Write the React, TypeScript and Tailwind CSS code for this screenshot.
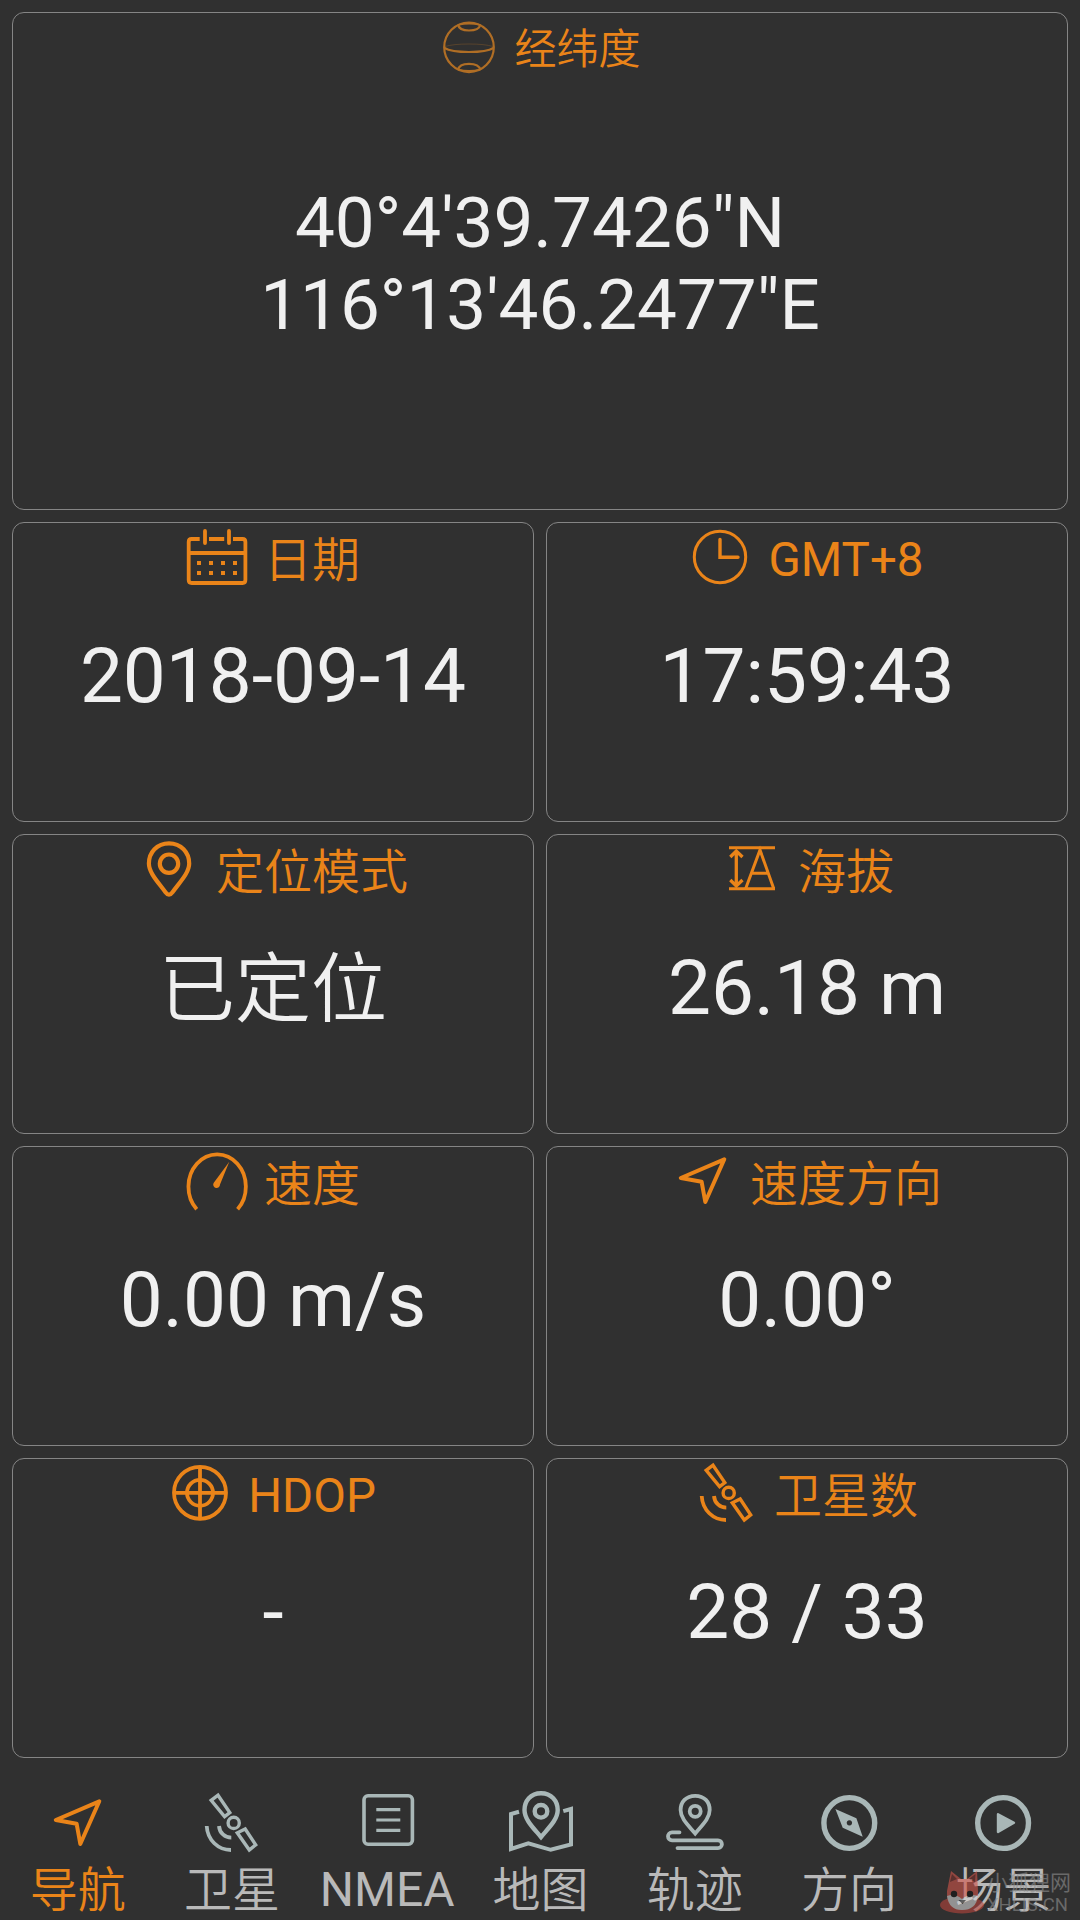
import type { ReactNode } from "react";

function Icon({ children, className = "" }: { children: ReactNode; className?: string }) {
  return (
    <svg
      viewBox="0 0 60 60"
      className={`size-[60px] shrink-0 overflow-visible ${className}`}
      fill="none"
      stroke="currentColor"
      strokeWidth={3.8}
    >
      {children}
    </svg>
  );
}

const GlobeIcon = () => (
  <Icon className="text-[#b06e25]">
    <g strokeWidth={2.2}>
      <circle cx="30" cy="30.3" r="24.8" />
      <path d="M19 7.500 Q20 13.5 30 13.5 Q40 13.5 41.500 7.500" />
      <path d="M19 53 Q20 46.8 30 46.8 Q40 46.8 41.500 53" />
      <path d="M5.5 31 Q12 35 30 35 Q48 35 54.5 31" />
      <path d="M6 29.5 Q14 27 30 27 Q46 27 54 29.5" strokeWidth={1} opacity={0.3} />
      <path d="M19 8 Q30 5 41.500 8 M19 52.5 Q30 55.500 41.500 52.5" strokeWidth={1.8} />
    </g>
  </Icon>
);

const CalendarIcon = () => (
  <Icon>
    <path d="M13.7 12 H5.5 Q2.7 12 2.7 15 V53 Q2.7 56 5.7 56 H56.5 Q59.4 56 59.4 53 V15 Q59.4 12 56.5 12 H47 M23 12 H38.2 M2.7 26 H59.4" />
    <path d="M19 4 V16 M43 4 V16" strokeLinecap="round" />
    <path d="M11 36 h4 M23 36 h4 M35 36 h4 M47 36 h4 M11 46 h4 M23 46 h4 M35 46 h4 M47 46 h4" strokeWidth={4} />
  </Icon>
);

const ClockIcon = () => (
  <Icon>
    <circle cx="30" cy="30" r="25.7" strokeWidth={3} />
    <path d="M30 12.5 V30.3 H48" strokeWidth={3.4} strokeLinecap="round" />
  </Icon>
);

const PinIcon = () => (
  <Icon>
    <path
      d="M31 4.3 C19 4.3 10.9 13.3 10.9 24.5 C10.9 34 20.5 43.5 27.5 53.2 Q31 58 34.5 53.2 C41.5 43.5 51.2 34 51.2 24.5 C51.2 13.3 43 4.3 31 4.3Z"
      strokeWidth={4.2}
    />
    <circle cx="31" cy="24.7" r="9.2" strokeWidth={4.2} />
  </Icon>
);

const AltitudeIcon = () => (
  <Icon>
    <g strokeWidth={3}>
      <path d="M9 8.7 H55 M9 49.8 H55" />
      <path d="M16.3 12 V47 M10.3 18 L16.3 12 L22.5 18 M10.3 41 L16.3 47 L22.5 41" strokeWidth={3.3} />
      <path d="M25.7 49.5 L40 11 L53.7 49.5 M30.5 34.3 H48.5" />
    </g>
  </Icon>
);

const SpeedIcon = () => (
  <Icon>
    <path d="M10.7 58.3 A28.7 32.3 0 1 1 51.6 58.3" />
    <path d="M43.3 10.7 L34 33.5 A3.4 3.4 0 1 1 27.6 32 Z" fill="currentColor" stroke="none" />
  </Icon>
);

const ArrowIcon = () => (
  <Icon>
    <path d="M52.3 8.3 L8.8 27 L29.6 30.7 L33.3 51 Z" strokeLinejoin="round" strokeWidth={4} />
  </Icon>
);

const TargetIcon = () => (
  <Icon>
    <circle cx="30" cy="29.8" r="26" />
    <circle cx="30" cy="29.8" r="13" />
    <path d="M30 3 V57 M3 29.8 H57" />
  </Icon>
);

const SatelliteIcon = () => (
  <Icon>
    <g strokeWidth={3.4}>
      <path d="M17 2.2 L28.8 19.6 L23.6 23.6 L10.2 7.3 Z" />
      <path d="M44.2 36 L54.7 51.8 L48.3 57 L36.3 39.8 Z" />
      <circle cx="32.7" cy="29.9" r="5.6" />
      <path d="M18 33 C18.5 40 24 44.7 30.3 44.7 M5.7 33 C6.5 47 17 57 30 57" strokeWidth={3.8} />
    </g>
  </Icon>
);

const ListIcon = () => (
  <Icon>
    <rect x="8" y="2.8" width="48.4" height="48.4" rx="4" strokeWidth={3.6} />
    <path d="M20.3 16.7 H44.3 M20.3 27 H44.3 M20.3 37.3 H44.3" strokeWidth={3.2} />
  </Icon>
);

const MapIcon = () => (
  <Icon>
    <g strokeWidth={4.4}>
      <path d="M9 18.8 L1 21 V56 L18.3 50.3 L40.7 56.8 L61 51.5 V16 L53.3 18.2" strokeWidth={4} />
      <path d="M31 0.2 C20.5 0.2 14.5 8 14.5 17 C14.5 26.5 23 34.5 31 44 C39 34.5 47.7 26.5 47.7 17 C47.7 8 41.5 0.2 31 0.2Z" />
      <circle cx="31" cy="18.3" r="6.3" />
    </g>
  </Icon>
);

const TrackIcon = () => (
  <Icon>
    <path d="M31.2 2.8 C22 2.8 16.6 9 16.6 17 C16.6 25.5 24 32 31.2 40.5 C38.4 32 45.7 25.5 45.7 17 C45.7 9 40.5 2.8 31.2 2.8Z" />
    <circle cx="31.2" cy="18.3" r="5.5" />
    <path
      d="M15.5 39.3 H8 A4 4 0 0 0 8 47.3 H54 A3.9 3.9 0 0 1 54 55.1 H13.5"
      strokeLinecap="round"
    />
  </Icon>
);

const CompassIcon = () => (
  <Icon>
    <circle cx="30.3" cy="30" r="25.4" strokeWidth={5.4} />
    <path
      d="M16.4 16 L37.4 25.3 L43.7 43.7 L23.7 34.7 Z M30.4 27.2 a2.7 2.7 0 1 0 0.01 0 Z"
      fill="currentColor"
      fillRule="evenodd"
      stroke="none"
    />
  </Icon>
);

const PlayIcon = () => (
  <Icon>
    <circle cx="30.1" cy="30" r="25.4" strokeWidth={5.4} />
    <path d="M25 21.3 L41 29.8 L25 39 Z" fill="currentColor" strokeWidth={2.4} strokeLinejoin="round" />
  </Icon>
);

type CardData = { label: string; value: string; icon: ReactNode };

const cards: CardData[] = [
  { label: "日期", value: "2018-09-14", icon: <CalendarIcon /> },
  { label: "GMT+8", value: "17:59:43", icon: <ClockIcon /> },
  { label: "定位模式", value: "已定位", icon: <PinIcon /> },
  { label: "海拔", value: "26.18 m", icon: <AltitudeIcon /> },
  { label: "速度", value: "0.00 m/s", icon: <SpeedIcon /> },
  { label: "速度方向", value: "0.00°", icon: <ArrowIcon /> },
  { label: "HDOP", value: "-", icon: <TargetIcon /> },
  { label: "卫星数", value: "28 / 33", icon: <SatelliteIcon /> },
];

const tabs: { label: string; icon: ReactNode }[] = [
  { label: "导航", icon: <ArrowIcon /> },
  { label: "卫星", icon: <SatelliteIcon /> },
  { label: "NMEA", icon: <ListIcon /> },
  { label: "地图", icon: <MapIcon /> },
  { label: "轨迹", icon: <TrackIcon /> },
  { label: "方向", icon: <CompassIcon /> },
  { label: "场景", icon: <PlayIcon /> },
];

const isHan = (text: string) => /[\u4e00-\u9fff]/.test(text);

function InfoCard({ label, value, icon }: CardData) {
  return (
    <section className="h-[300px] rounded-[12px] border border-[#858585] pt-1">
      <h2 className="flex h-[60px] items-center justify-center gap-[18px] text-[#ea8419]">
        {icon}
        <span
          className={
            isHan(label)
              ? "pt-[7px] text-[48px] leading-[60px] font-[350] whitespace-nowrap"
              : "pt-[5px] text-[47.5px] leading-[60px] whitespace-nowrap"
          }
        >
          {label}
        </span>
      </h2>
      <p
        className={
          isHan(value)
            ? "mt-[43px] text-center text-[76px] leading-[96px] font-[350] whitespace-nowrap text-[#f0f0f0]"
            : "mt-[41px] text-center text-[76.5px] leading-[96px] whitespace-nowrap text-[#f0f0f0]"
        }
      >
        {value}
      </p>
    </section>
  );
}

function Watermark() {
  return (
    <div className="absolute right-[9px] bottom-[5px] flex items-end gap-0.5 opacity-60">
      <svg viewBox="0 0 46 46" className="h-[46px] w-[46px]">
        <ellipse cx="23" cy="36" rx="22" ry="8.5" fill="#b8453c" />
        <path d="M8 22 L12 2 L22 10 H28 L38 2 L39 22 Q40 41 23 41 Q7 41 8 22Z" fill="#d2554a" />
        <path d="M11 13 L13 5 L18 10Z M36 13 L36.500 5 L30 10Z" fill="#77302d" />
        <path d="M8 27 Q16 24 23 30 Q30 24 39 27 Q37 41 23 41 Q10 41 8 27Z" fill="#d4d4d4" />
        <circle cx="15" cy="25" r="3.2" fill="#151515" />
        <circle cx="31" cy="25" r="3.2" fill="#151515" />
        <path d="M19.500 31 H27 L23.500 35Z" fill="#222222" />
      </svg>
      <div className="flex flex-col text-[#8f8f8f]">
        <span className="text-[21px] leading-[24px]">小狐狸网</span>
        <span className="text-[18.500px] leading-[20px]">XHLIS.CN</span>
      </div>
    </div>
  );
}

export default function App() {
  return (
    <div className="relative flex h-[1920px] w-[1080px] flex-col overflow-hidden bg-[#303030] font-[Roboto,'Noto_Sans_CJK_SC',sans-serif]">
      <main className="grid grid-cols-2 gap-3 p-3 pb-0">
        <section className="col-span-2 h-[498px] rounded-[12px] border border-[#858585] pt-1">
          <h1 className="flex h-[60px] items-center justify-center gap-[15px] text-[42px] leading-[60px] text-[#ea8419]">
            <GlobeIcon />
            <span className="pt-[5px] font-[350]">经纬度</span>
          </h1>
          <p className="mt-[105px] text-center text-[71px] leading-[82px] text-[#f0f0f0]">
            40°4'39.7426"N
            <br />
            116°13'46.2477"E
          </p>
        </section>
        {cards.map((card) => (
          <InfoCard key={card.label} {...card} />
        ))}
      </main>
      <nav className="mt-[35px] grid grid-cols-7 text-[#b9b9b9]">
        {tabs.map((tab, i) => (
          <button
            key={tab.label}
            className={`flex flex-col items-center ${i === 0 ? "text-[#ea8419]" : ""}`}
          >
            <span className={i === 0 ? "" : "text-[#a9b7b7]"}>{tab.icon}</span>
            <span
              className={
                isHan(tab.label)
                  ? "mt-[6px] pl-px text-[48px] leading-[64px] font-[350] whitespace-nowrap"
                  : "mt-[5px] pl-[3px] text-[48px] leading-[64px] whitespace-nowrap"
              }
            >
              {tab.label}
            </span>
          </button>
        ))}
      </nav>
      <Watermark />
    </div>
  );
}
